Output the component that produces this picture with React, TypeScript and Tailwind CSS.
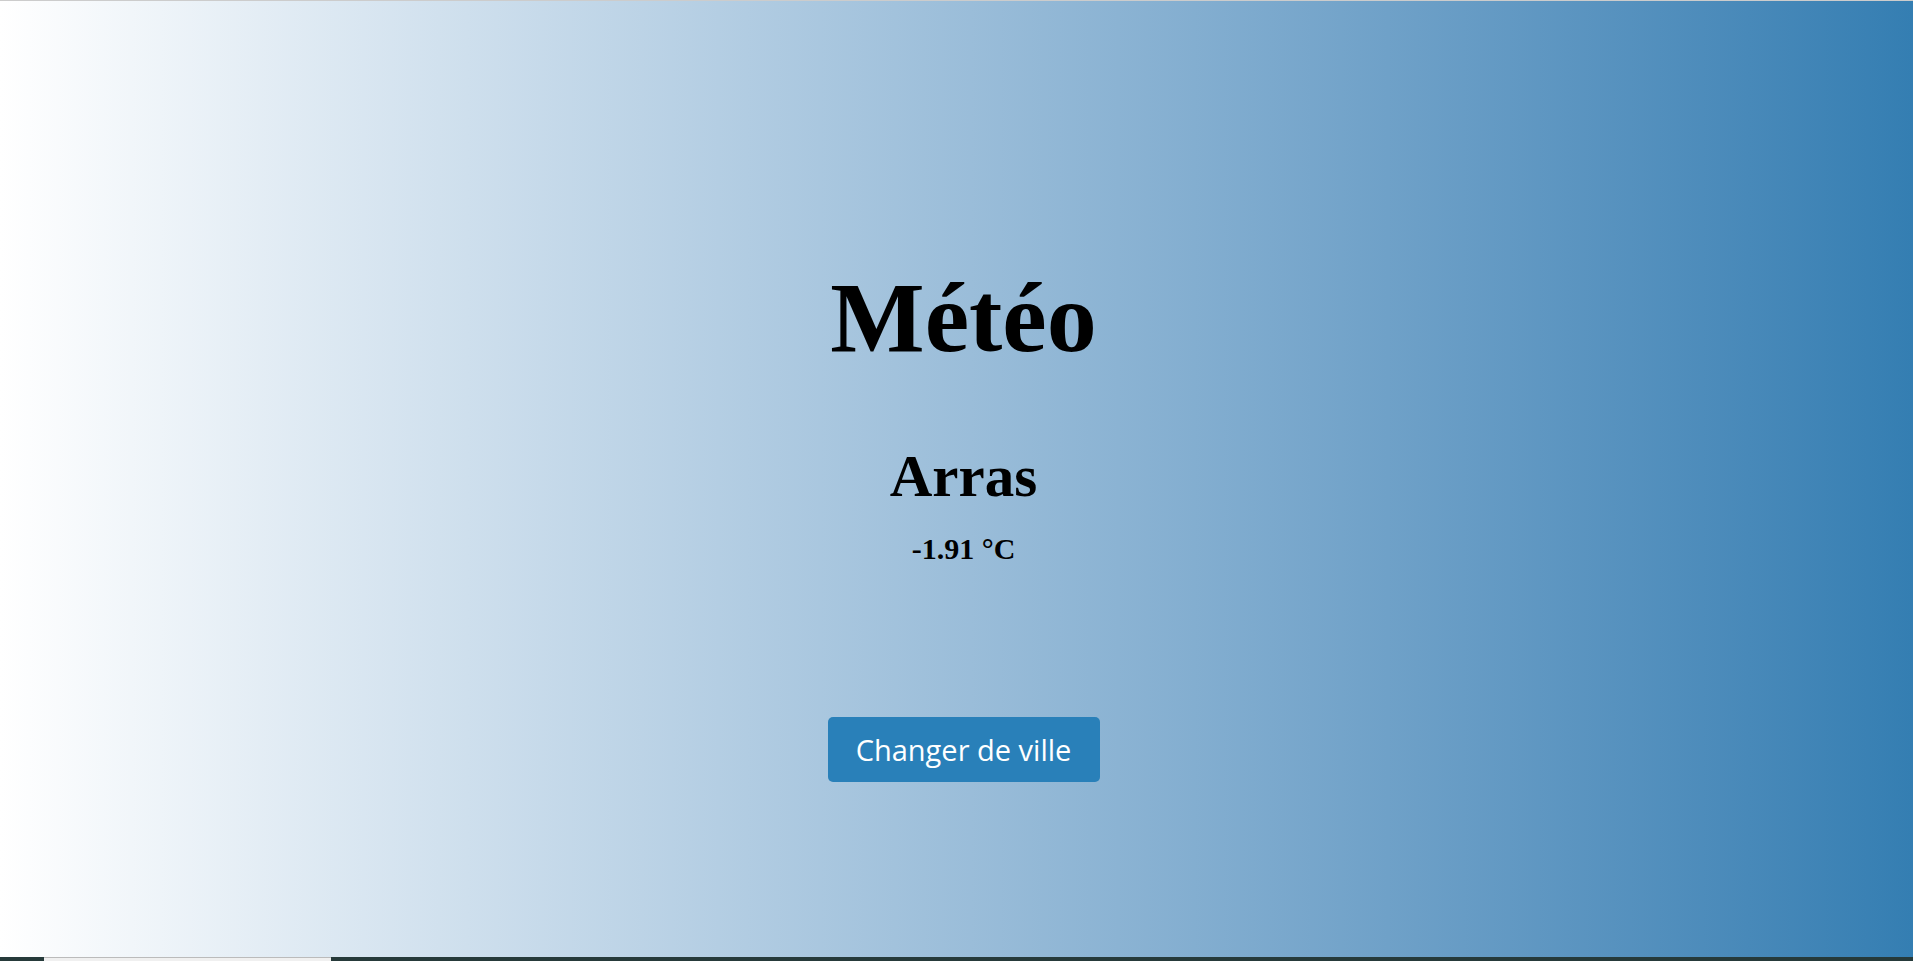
import React from 'react';

const App: React.FC = () => {
  return (
    <div className="flex h-[961px] w-full flex-col overflow-hidden">
      <div className="h-px w-full bg-[#cccccc]" />
      <main className="flex flex-1 flex-col items-center bg-gradient-to-r from-white to-[#347eb2] pl-[14px] pt-[267px] font-['Liberation_Serif',serif] text-black">
        <h1 className="text-[100px] font-bold leading-none">Météo</h1>
        <h2 className="mt-[79px] text-[59px] font-bold leading-none">Arras</h2>
        <p className="mt-[28px] text-[30px] font-bold leading-none">-1.91 °C</p>
        <button
          type="button"
          className="mt-[153px] flex h-[65px] w-[272px] items-center justify-center rounded-[5px] bg-[#2980b9] font-['Open_Sans',sans-serif] text-[29px] text-white"
        >
          Changer de ville
        </button>
      </main>
      <div className="flex h-[4px] w-full bg-[#263a3a]">
        <div className="ml-[44px] w-[287px] border-t border-[#bbbbbb] bg-[#f0f0f0]" />
      </div>
    </div>
  );
};

export default App;
